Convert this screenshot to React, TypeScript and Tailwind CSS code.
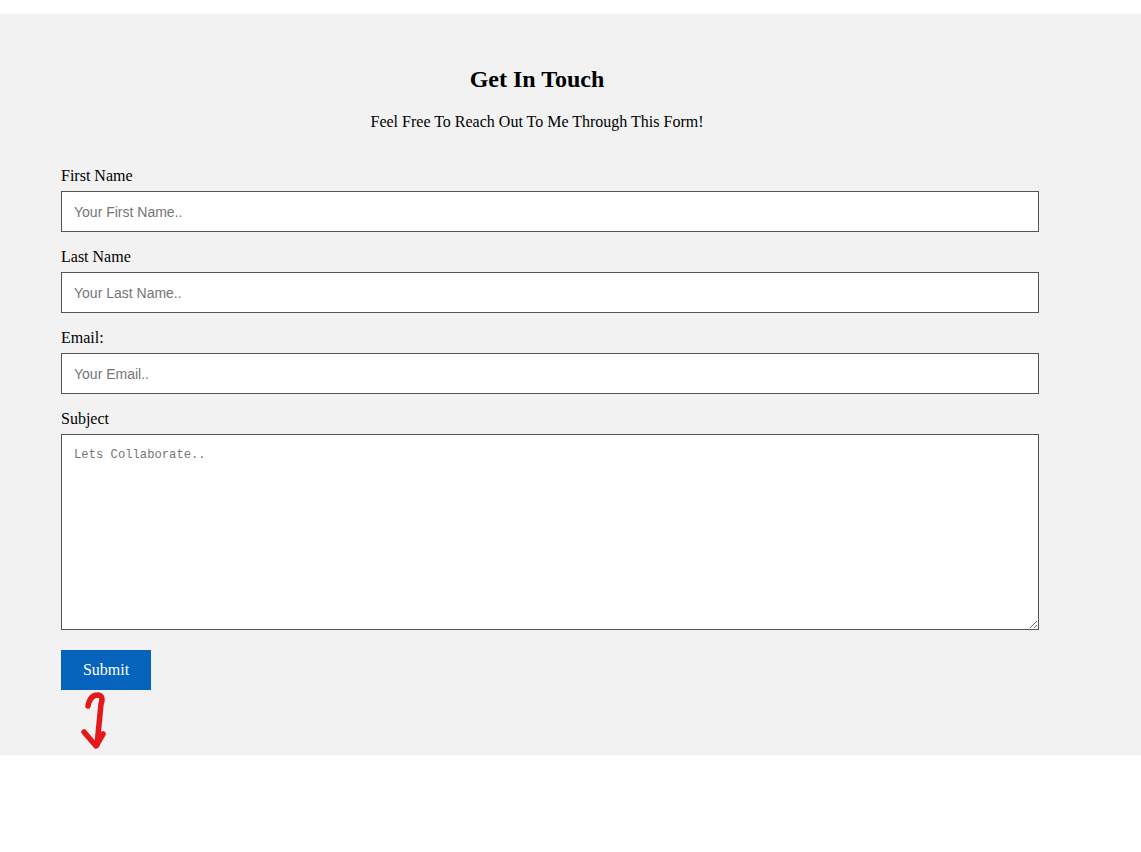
const fields = [
  { label: 'First Name', placeholder: 'Your First Name..' },
  { label: 'Last Name', placeholder: 'Your Last Name..' },
  { label: 'Email:', placeholder: 'Your Email..' },
];

export default function App() {
  return (
    <div className="min-h-[852px] bg-white pt-[14px] font-['Liberation_Serif',serif] text-black">
      <section className="relative h-[741px] bg-[#f2f2f2] pl-[61px] pt-[51px]">
        <div className="w-[952px] text-center">
          <h2 className="text-[24px] font-bold leading-[28px]">Get In Touch</h2>
          <p className="mt-[20px] text-[16px] leading-[18px]">
            Feel Free To Reach Out To Me Through This Form!
          </p>
        </div>

        <form className="mt-[36px] flex flex-col" onSubmit={(e) => e.preventDefault()}>
          {fields.map((f) => (
            <label key={f.label} className="mb-[16px] flex flex-col">
              <span className="text-[16px] leading-[18px]">{f.label}</span>
              <input
                type="text"
                placeholder={f.placeholder}
                className="mt-[6px] h-[41px] w-[978px] border border-[#555] bg-white px-[12px] font-['Liberation_Sans',sans-serif] text-[14px] placeholder:text-[#757575] outline-none"
              />
            </label>
          ))}
          <label className="flex flex-col">
            <span className="text-[16px] leading-[18px]">Subject</span>
            <textarea
              placeholder="Lets Collaborate.."
              className="mt-[6px] h-[196px] w-[978px] border border-[#555] bg-white px-[12px] py-[12px] font-['Liberation_Mono',monospace] text-[12.2px] leading-[17px] placeholder:text-[#757575] outline-none"
            />
          </label>
          <button
            type="submit"
            className="mt-[20px] h-[40px] w-[90px] bg-[#0563bb] text-[16px] text-white"
          >
            Submit
          </button>
        </form>

        {/* hand-drawn annotation */}
        <svg
          aria-hidden
          viewBox="0 0 30 60"
          className="pointer-events-none absolute left-[80px] top-[676px] h-[60px] w-[30px]"
          fill="none"
          stroke="#e4191c"
          strokeWidth="5.5"
          strokeLinecap="round"
          strokeLinejoin="round"
        >
          <path d="M8 16 Q10 5 18 5 Q24 6 21 14 L17 55" />
          <path d="M4 42 L16 56 L23 44" />
        </svg>
      </section>
    </div>
  );
}
